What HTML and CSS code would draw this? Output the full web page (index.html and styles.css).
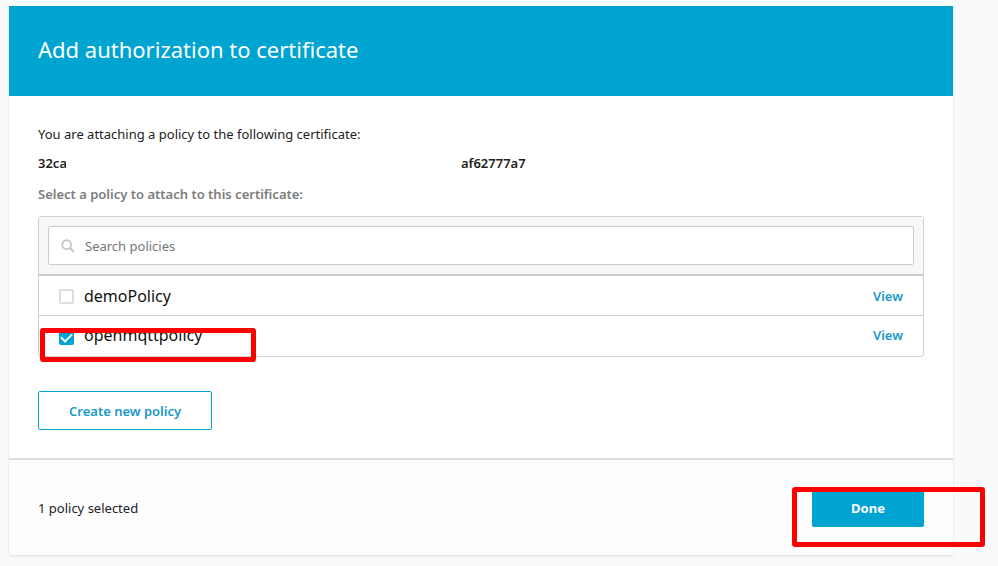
FILE: index.html
```html
<!DOCTYPE html>
<html lang="en">
<head>
<meta charset="UTF-8">
<title>Add authorization to certificate</title>
<link rel="stylesheet" href="styles.css">
</head>
<body>

<div class="dialog">
  <header class="dialog-header">
    <h1>Add authorization to certificate</h1>
  </header>

  <div class="dialog-body">
    <p class="intro">You are attaching a policy to the following certificate:</p>
    <p class="cert"><span class="cert-start">32ca</span><span class="cert-end">af62777a7</span></p>
    <h2>Select a policy to attach to this certificate:</h2>

    <div class="policies">
      <div class="search">
        <div class="search-box">
          <svg width="14" height="14" viewBox="0 0 14 14" aria-hidden="true">
            <circle cx="5.7" cy="5.7" r="4.4" fill="none" stroke="#c8c8c8" stroke-width="1.9"/>
            <path d="M9 9l3.2 3.2" stroke="#c8c8c8" stroke-width="2.2" stroke-linecap="round"/>
          </svg>
          <input type="text" placeholder="Search policies" aria-label="Search policies">
        </div>
      </div>
      <div class="policy">
        <input type="checkbox" id="demo">
        <label for="demo">demoPolicy</label>
        <a href="#">View</a>
      </div>
      <div class="policy">
        <input type="checkbox" id="openmqtt" checked>
        <label for="openmqtt">openmqttpolicy</label>
        <a href="#">View</a>
        <div class="mark mark-policy"></div>
      </div>
    </div>

    <button type="button" class="btn btn-create">Create new policy</button>
  </div>

  <footer class="dialog-footer">
    <span>1 policy selected</span>
    <div class="done">
      <button type="button" class="btn btn-done">Done</button>
      <div class="mark mark-done"></div>
    </div>
  </footer>
</div>

</body>
</html>
```

FILE: styles.css
```css
* {
  box-sizing: border-box;
}
body {
  margin: 0;
  padding: 6px 45px 11px 9px;
  background: #f9fafa;
  font-family: "Noto Sans", "Open Sans", sans-serif;
  font-size: 13px;
  line-height: 20px;
  color: #222;
}
.dialog {
  background: #fff;
  box-shadow: 0 1px 2px rgba(0, 0, 0, 0.12);
}
.dialog-header {
  padding: 27px 29px 31px;
  background: #00a4d1;
  color: #fff;
}
h1 {
  margin: 0;
  font-size: 22px;
  line-height: 32px;
  font-weight: 400;
}
.dialog-body {
  padding: 28px 29px;
}
.intro {
  margin: 0 0 9px;
}
.cert {
  display: flex;
  margin: 0 0 11px;
  font-weight: 600;
}
.cert-start {
  width: 28px;
  margin-right: 395px;
  overflow: hidden;
}
h2 {
  margin: 0 0 12px;
  font-size: 13px;
  line-height: 20px;
  font-weight: 600;
  color: #7c7c7c;
}

/* policy list */
.policies {
  margin-bottom: 34px;
  border: 1px solid #d0d0d0;
  border-radius: 3px;
}
.search {
  padding: 9px;
  background: #f7f7f7;
  border-bottom: 2px solid #ccc;
}
.search-box {
  display: flex;
  align-items: center;
  height: 39px;
  padding: 0 12px;
  background: #fff;
  border: 1px solid #ccc;
  border-radius: 2px;
}
.search-box input {
  flex: 1;
  margin-left: 10px;
  padding: 0;
  border: 0;
  outline: 0;
  font: inherit;
}
.search-box input::placeholder {
  color: #777;
}
.policy {
  position: relative;
  display: flex;
  align-items: center;
  height: 39px;
  padding: 0 20px;
}
.policy + .policy {
  height: 41px;
  padding-bottom: 2px;
  border-top: 1px solid #ccc;
}
.policy input {
  appearance: none;
  width: 15px;
  height: 15px;
  margin: 2px 10px 0 0;
  border: 2px solid #ddd;
  border-radius: 2px;
  background: #fff;
}
.policy input:checked {
  display: flex;
  align-items: center;
  justify-content: center;
  margin-top: 4px;
  background: #00a4d1;
  border-color: #00a4d1;
}
.policy input:checked::before {
  content: "";
  width: 9px;
  height: 5px;
  margin-bottom: 2px;
  border: solid #fff;
  border-width: 0 0 2px 2px;
  transform: rotate(-45deg);
}
.policy label {
  flex: 1;
  font-size: 16px;
  color: #111;
}
a {
  color: #1a98c9;
  font-weight: 600;
  text-decoration: none;
}

/* buttons */
.btn {
  display: block;
  height: 38px;
  border-radius: 2px;
  font: inherit;
  font-weight: 600;
}
.btn-create {
  height: 39px;
  padding: 0 30px;
  background: #fff;
  border: 1px solid #00a4d1;
  color: #1a98c9;
}
.btn-done {
  width: 112px;
  background: #00a4d1;
  border: 0;
  color: #fff;
  font-weight: 700;
}

.dialog-footer {
  display: flex;
  align-items: center;
  justify-content: space-between;
  padding: 29px 29px 28px;
  background: #fdfdfd;
  border-top: 2px solid #ddd;
}
.done {
  position: relative;
}

/* red highlight frames */
.mark {
  position: absolute;
  border: 5px solid #f00;
  border-radius: 3px;
  pointer-events: none;
}
.mark-policy {
  top: 12px;
  left: 1px;
  width: 216px;
  height: 34px;
}
.mark-done {
  top: -2px;
  left: -20px;
  width: 193px;
  height: 60px;
}
```
